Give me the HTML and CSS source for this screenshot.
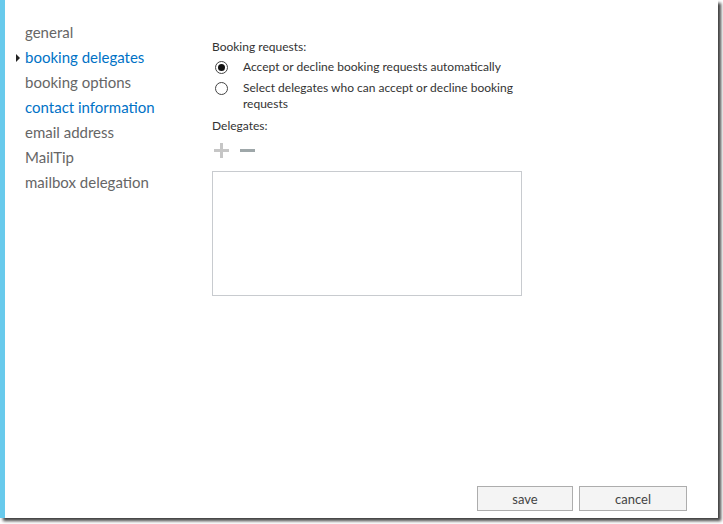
FILE: index.html
```html
<!DOCTYPE html>
<html>
<head>
<meta charset="utf-8">
<link rel="stylesheet" href="styles.css">
</head>
<body>
<div class="window">
  <div class="body">
    <nav class="nav">
      <a class="nav-item">general</a>
      <a class="nav-item active">booking delegates</a>
      <a class="nav-item">booking options</a>
      <a class="nav-item link">contact information</a>
      <a class="nav-item">email address</a>
      <a class="nav-item">MailTip</a>
      <a class="nav-item">mailbox delegation</a>
    </nav>
    <main class="content">
      <div class="label first">Booking requests:</div>
      <div class="radio-row">
        <span class="radio checked"></span>
        <span class="radio-text">Accept or decline booking requests automatically</span>
      </div>
      <div class="radio-row">
        <span class="radio"></span>
        <span class="radio-text">Select delegates who can accept or decline booking requests</span>
      </div>
      <div class="label delegates">Delegates:</div>
      <div class="toolbar">
        <svg class="icon" width="15" height="15" viewBox="0 0 15 15"><path d="M7.5 0V15M0 7.5H15" stroke="#c6c6c6" stroke-width="3"/></svg>
        <svg class="icon" width="15" height="15" viewBox="0 0 15 15"><path d="M0 7.5H15" stroke="#9ea7a9" stroke-width="3"/></svg>
      </div>
      <div class="listbox"></div>
    </main>
  </div>
  <footer class="footer">
    <button class="btn save">save</button>
    <button class="btn cancel">cancel</button>
  </footer>
</div>
</body>
</html>
```

FILE: styles.css
```css
html, body {
  margin: 0;
  padding: 0;
  background: #ffffff;
}
body {
  font-family: "Segoe UI", Lato, "Open Sans", sans-serif;
  width: 723px;
  height: 524px;
  overflow: hidden;
}
.window {
  width: 713px;
  height: 518px;
  border-left: 5px solid #68caec;
  background: #fff;
  box-shadow: 3px 3px 3px rgba(0, 0, 0, 0.75);
  display: flex;
  flex-direction: column;
  box-sizing: content-box;
}
.body {
  display: flex;
  flex: 1;
}
.nav {
  width: 187px;
  padding: 20px 0 0 20px;
  display: flex;
  flex-direction: column;
}
.nav-item {
  position: relative;
  font-size: 15px;
  line-height: 25px;
  height: 25px;
  color: #666666;
  white-space: nowrap;
}
.nav-item.active,
.nav-item.link {
  color: #0072c6;
}
.nav-item.active::before {
  content: "";
  position: absolute;
  left: -9px;
  top: 9px;
  border-left: 4px solid #222;
  border-top: 4px solid transparent;
  border-bottom: 4px solid transparent;
}
.content {
  padding-top: 39px;
  display: flex;
  flex-direction: column;
  font-size: 12px;
  color: #333333;
}
.label {
  line-height: 16px;
}
.radio-row {
  display: flex;
  align-items: flex-start;
  width: 305px;
  margin-top: 4px;
  line-height: 16px;
}
.radio-row + .radio-row {
  margin-top: 5px;
}
.radio {
  flex: none;
  width: 11px;
  height: 11px;
  border: 1px solid #444;
  border-radius: 50%;
  margin: 2px 15px 0 3px;
  box-sizing: content-box;
  display: flex;
  align-items: center;
  justify-content: center;
}
.radio + .radio-text {
  color: #333;
}
.radio-row:last-of-type .radio {
  margin-top: 6px;
  border-color: #555;
}
.radio.checked::after {
  content: "";
  width: 7px;
  height: 7px;
  border-radius: 50%;
  background: #111;
}
.label.delegates {
  margin-top: 6px;
}
.toolbar {
  display: flex;
  gap: 11px;
  margin: 9px 0 0 2px;
  height: 15px;
}
.icon {
  display: block;
}
.listbox {
  margin-top: 13px;
  width: 308px;
  height: 123px;
  border: 1px solid #c8cbcf;
}
.footer {
  display: flex;
  justify-content: flex-end;
  gap: 6px;
  padding: 0 31px 7px 0;
}
.btn {
  height: 25px;
  box-sizing: border-box;
  background: #f4f4f4;
  border: 1px solid #adadad;
  font-family: "Segoe UI", Lato, "Open Sans", sans-serif;
  font-size: 13px;
  color: #444;
  padding: 0;
}
.btn.save {
  width: 96px;
}
.btn.cancel {
  width: 108px;
}
```
